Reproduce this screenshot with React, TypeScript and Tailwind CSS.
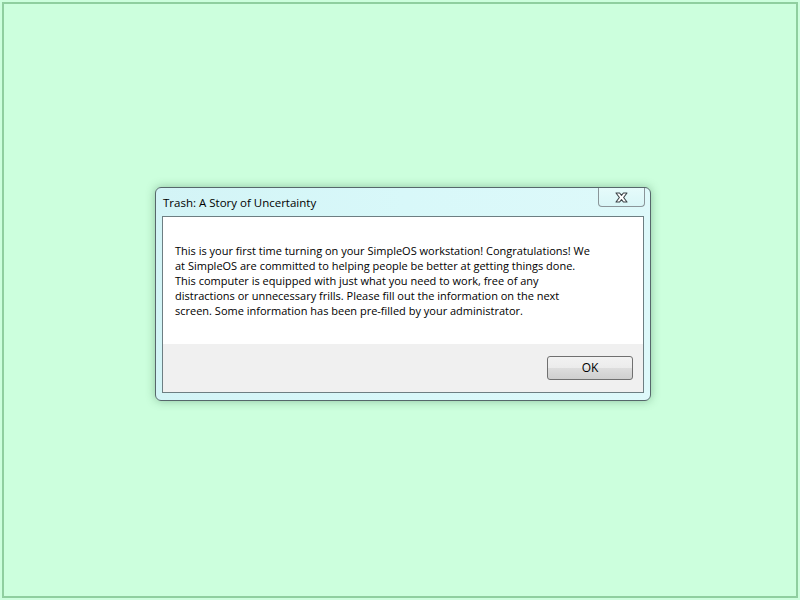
import React from 'react';

const lines = [
  'This is your first time turning on your SimpleOS workstation! Congratulations! We',
  'at SimpleOS are committed to helping people be better at getting things done.',
  'This computer is equipped with just what you need to work, free of any',
  'distractions or unnecessary frills. Please fill out the information on the next',
  'screen. Some information has been pre-filled by your administrator.',
];

// Aero-style close glyph: white X with a dark outline
const CloseGlyph: React.FC = () => (
  <svg width="13" height="11" viewBox="0 0 13 11">
    <path
      d="M1 1 H4.6 L6.5 3.3 L8.4 1 H12 L8.6 5.5 L12 10 H8.4 L6.5 7.7 L4.6 10 H1 L4.4 5.5 Z"
      fill="#ffffff"
      stroke="#3c4448"
      strokeWidth="1.1"
      strokeLinejoin="round"
    />
  </svg>
);

const App: React.FC = () => {
  return (
    <div className="w-[800px] h-[600px] bg-[#ccffdd] p-[2px]">
      <div
        className="h-full border-2 border-[#8fcf9f] pl-[151px] pt-[183px]"
        style={{ fontFamily: '"Segoe UI", "Open Sans", sans-serif' }}
      >
        {/* Window frame */}
        <div className="relative w-[496px] h-[214px] rounded-[6px] border border-[#56676b] bg-gradient-to-r from-[#d3f4f6] via-[#d8f8f9] to-[#def9fa] shadow-[0_0_10px_rgba(30,80,50,0.35)] flex flex-col px-[6px] pb-[7px]">
          {/* Title bar */}
          <div className="h-[28px] flex items-start justify-between">
            <span className="pt-[7px] pl-[1px] text-[11.5px] leading-[16px] text-black">
              Trash: A Story of Uncertainty
            </span>
            <button className="w-[47px] h-[19px] -mr-[1px] rounded-b-[4px] border border-t-0 border-[#8a9599] bg-gradient-to-b from-[#e6fbfb] to-[#d9f6f7] flex items-center justify-center">
              <CloseGlyph />
            </button>
          </div>

          {/* Client area */}
          <div className="flex-1 border border-[#6d7e82] flex flex-col">
            <div className="bg-white h-[127px] pl-[12px] pt-[26px]">
              {lines.map((l) => (
                <div key={l} className="text-[11px] leading-[15px] text-black whitespace-nowrap">
                  {l}
                </div>
              ))}
            </div>
            <div className="flex-1 bg-[#f0f0f0] flex justify-end items-start pt-[12px] pr-[10px]">
              <button className="w-[86px] h-[24px] rounded-[3px] border border-[#707070] bg-[linear-gradient(#f2f2f2_0%,#ebebeb_50%,#dddddd_51%,#cfcfcf_100%)] text-[12px] text-black">
                OK
              </button>
            </div>
          </div>
        </div>
      </div>
    </div>
  );
};

export default App;
